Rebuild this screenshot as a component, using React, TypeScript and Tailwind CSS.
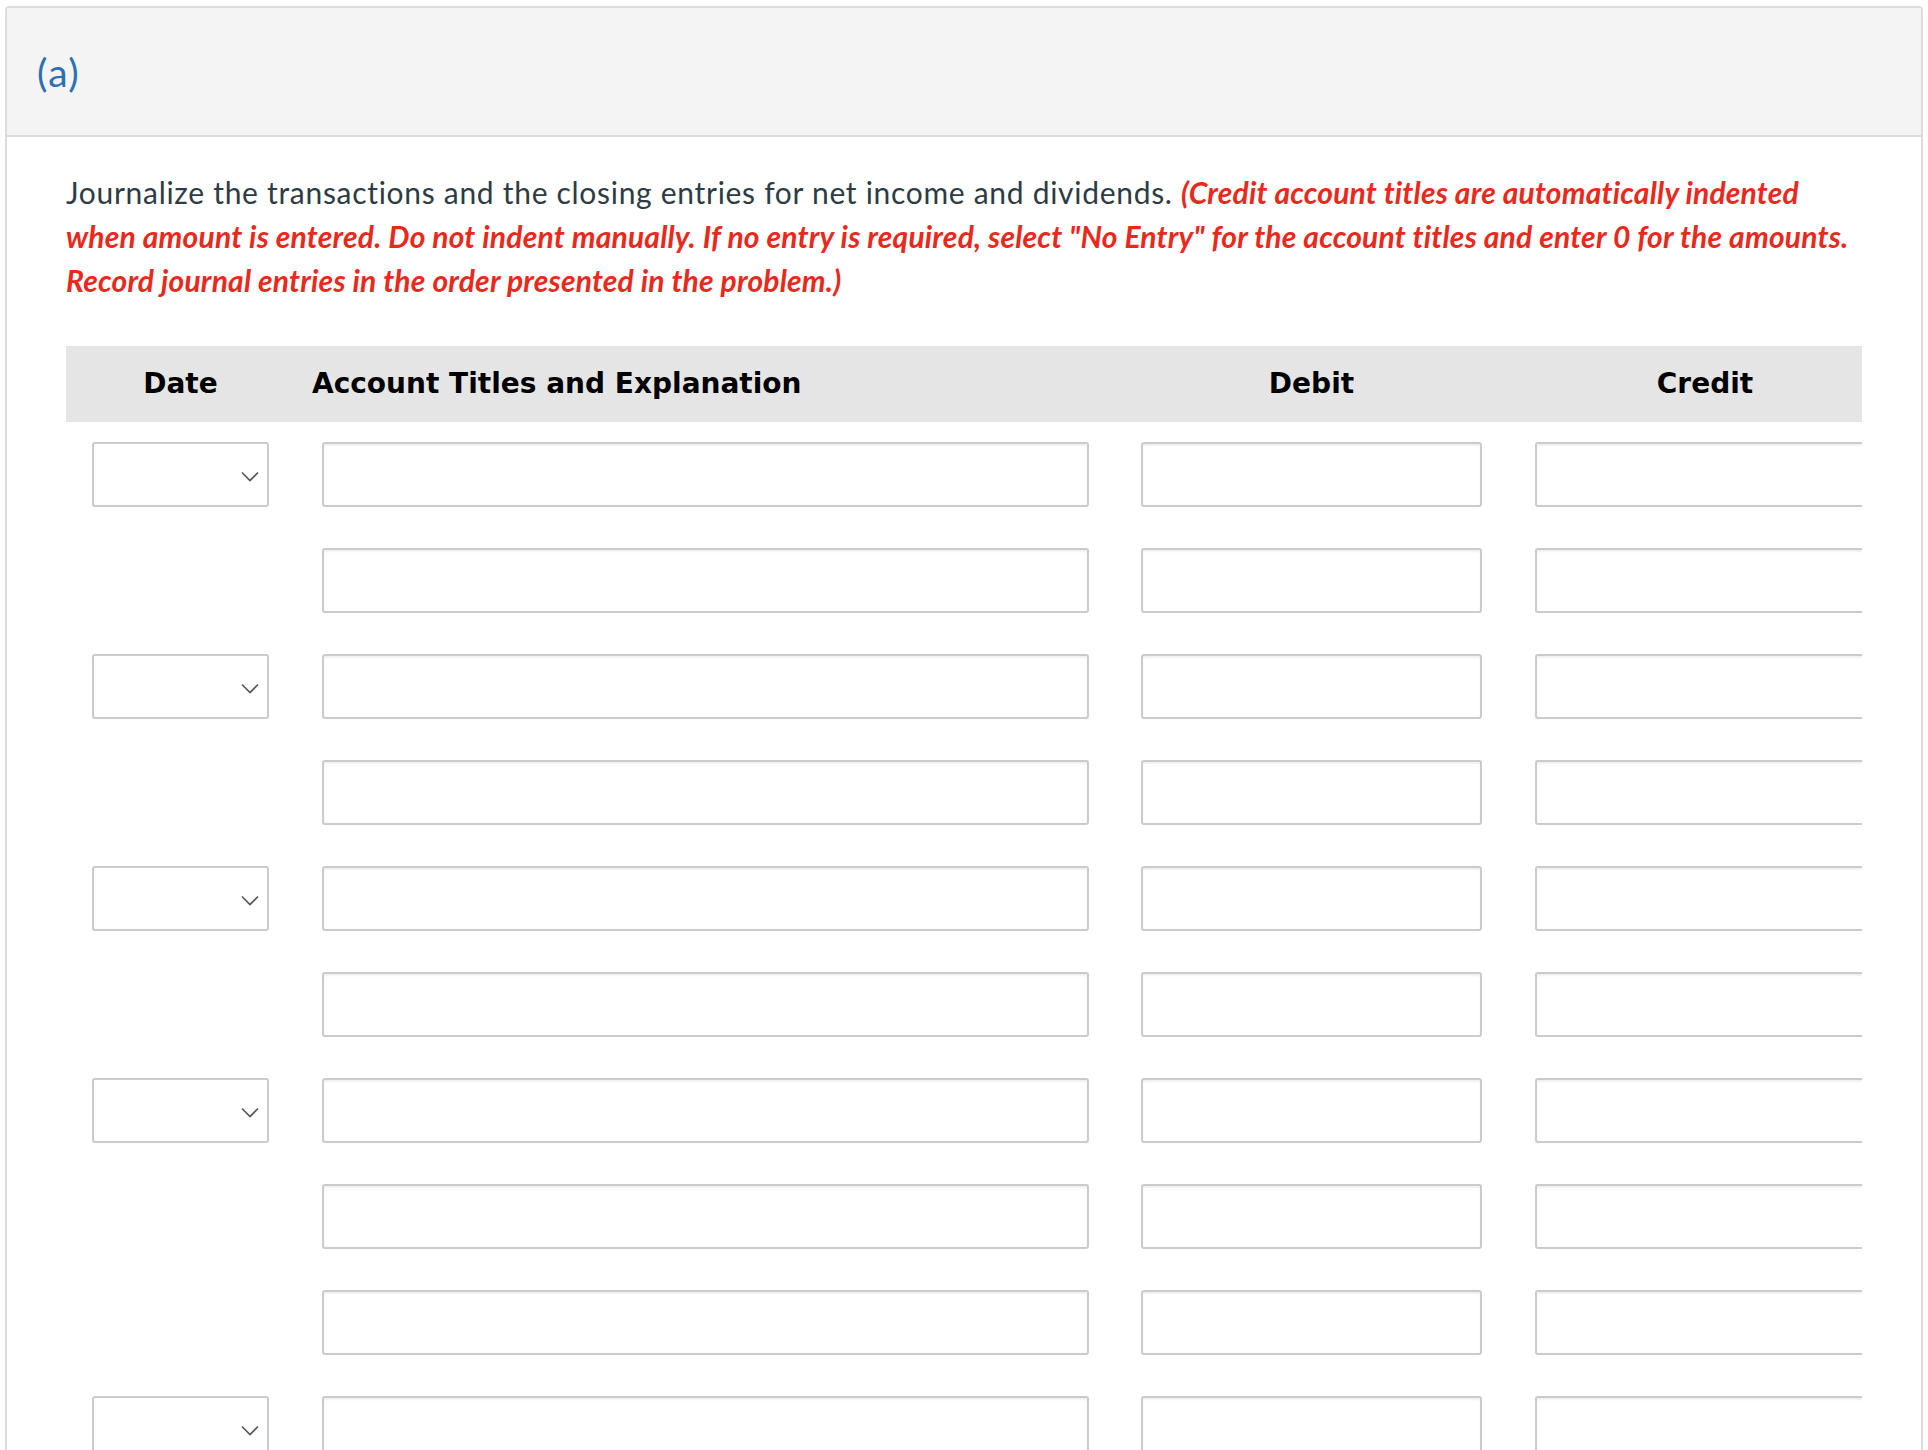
import React from 'react';

// rows: true = row has a date dropdown
const rows = [true, false, true, false, true, false, true, false, false, true, false];

function Chevron() {
  return (
    <svg width="18" height="11" viewBox="0 0 18 11" fill="none" className="absolute right-[8px] top-[27px]">
      <path d="M1 1.5 L9 9.5 L17 1.5" stroke="#555555" strokeWidth="1.6" />
    </svg>
  );
}

function Field({ width }: { width: string }) {
  return (
    <div
      className={`${width} h-[65px] shrink-0 rounded-[3px] border-2 border-[#cbcbcb] bg-white shadow-[inset_0_2px_2px_rgba(0,0,0,0.06)]`}
    />
  );
}

export default function App() {
  return (
    <div className="min-h-screen bg-white pt-[6px] pl-[5px] pr-[5px]" style={{ fontFamily: 'Lato, "Open Sans", sans-serif' }}>
      <div className="border-2 border-[#dcdcdc] rounded-t-[4px] bg-white">
        {/* header */}
        <div className="h-[129px] bg-[#f4f4f4] border-b-2 border-[#dcdcdc] flex items-center pl-[30px] pt-[2px]">
          <span className="text-[39px] tracking-[1.5px] text-[#2c6fb3] leading-none">(a)</span>
        </div>

        <div className="pl-[59px] pt-[33px]">
          {/* instructions */}
          <p className="text-[30px] leading-[44px] tracking-[0.7px] text-[#2d3b45] w-[1802px]">
            Journalize the transactions and the closing entries for net income and dividends.{' '}
            <em className="font-bold italic tracking-[0.2px] text-[#e8291c]">
              (Credit account titles are automatically indented when amount is entered. Do not indent manually. If no entry is
              required, select "No Entry" for the account titles and enter 0 for the amounts. Record journal entries in the order
              presented in the problem.)
            </em>
          </p>

          {/* journal table */}
          <div className="mt-[44px] w-[1796px] overflow-hidden">
            <div
              className="h-[76px] bg-[#e5e5e5] flex items-center text-[28px] font-bold text-black"
              style={{ fontFamily: '"DejaVu Sans", Verdana, sans-serif' }}
            >
              <div className="ml-[26px] w-[177px] shrink-0 text-center">Date</div>
              <div className="ml-[43px] w-[777px] shrink-0">Account Titles and Explanation</div>
              <div className="ml-[52px] w-[341px] shrink-0 text-center">Debit</div>
              <div className="ml-[53px] w-[340px] shrink-0 text-center">Credit</div>
            </div>

            <div className="pt-[20px] flex flex-col gap-[41px]">
              {rows.map((hasDate, i) => (
                <div key={i} className="flex">
                  <div className="ml-[26px] w-[177px] shrink-0">
                    {hasDate && (
                      <div className="relative h-[65px] rounded-[3px] border-2 border-[#cbcbcb] bg-white">
                        <Chevron />
                      </div>
                    )}
                  </div>
                  <div className="ml-[53px] shrink-0">
                    <Field width="w-[767px]" />
                  </div>
                  <div className="ml-[52px] shrink-0">
                    <Field width="w-[341px]" />
                  </div>
                  <div className="ml-[53px] shrink-0">
                    <Field width="w-[340px]" />
                  </div>
                </div>
              ))}
            </div>
          </div>
        </div>
      </div>
    </div>
  );
}
